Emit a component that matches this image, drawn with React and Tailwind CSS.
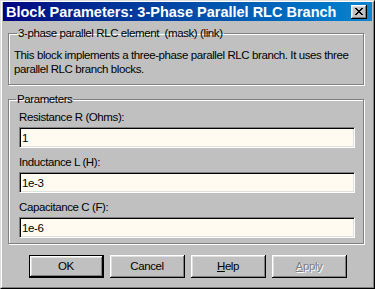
const raised =
  "shadow-[inset_-1px_-1px_0_#000,inset_1px_1px_0_#fff,inset_-2px_-2px_0_#808080,inset_2px_2px_0_#dfdfdf]";

const Field = ({ label, value }) => (
  <div className="flex flex-col">
    <div className="h-[14px] leading-[14px]">{label}</div>
    <input
      type="text"
      defaultValue={value}
      readOnly
      className="mt-[3px] h-[21px] w-full px-[2px] bg-[#fffbf0] border border-t-[#808080] border-l-[#808080] border-r-white border-b-white shadow-[inset_1px_1px_0_#000,inset_-1px_-1px_0_#dfdfdf] outline-none leading-[19px]"
    />
  </div>
);

const Button = ({ children, isDefault, disabled }) => (
  <button
    className={`w-[75px] h-[23px] bg-[#c0c0c0] flex items-center justify-center ${
      isDefault ? "border border-black" : ""
    }`}
    disabled={disabled}
  >
    <span
      className={`w-full h-full flex items-center justify-center ${raised} ${
        disabled ? "text-[#808080] [text-shadow:1px_1px_0_#fff]" : ""
      }`}
    >
      {children}
    </span>
  </button>
);

const CloseIcon = () => (
  <svg width="8" height="7" viewBox="0 0 8 7" shapeRendering="crispEdges">
    <path
      d="M0 0h2v1h-2zM6 0h2v1h-2zM1 1h2v1h-2zM5 1h2v1h-2zM2 2h4v1h-4zM3 3h2v1h-2zM2 4h4v1h-4zM1 5h2v1h-2zM5 5h2v1h-2zM0 6h2v1h-2zM6 6h2v1h-2z"
      fill="#000"
    />
  </svg>
);

const App = () => {
  return (
    <div className="w-[375px] h-[289px] bg-[#c0c0c0] border border-t-[#dfdfdf] border-l-[#dfdfdf] border-r-black border-b-black font-['Liberation_Sans',sans-serif] text-[11.5px] tracking-[-0.4px] text-black overflow-hidden">
      <div className="h-full border border-t-white border-l-white border-r-[#808080] border-b-[#808080] px-[1px] flex flex-col">
        {/* Title bar */}
        <div className="h-[19px] flex items-center justify-between bg-linear-to-r from-[#000080] to-[#1084d0] pl-[3px] pr-[5px]">
          <span className="pt-[2px] font-bold text-[14.5px] tracking-normal text-white leading-none whitespace-nowrap">
            Block Parameters: 3-Phase Parallel RLC Branch
          </span>
          <div className={`w-[16px] h-[14px] bg-[#c0c0c0] flex items-center justify-center ${raised}`}>
            <CloseIcon />
          </div>
        </div>

        {/* Mask description */}
        <fieldset className="mt-[5px] ml-[5px] w-[356px] border border-[#808080] shadow-[1px_1px_0_#fff,inset_1px_1px_0_#fff] pl-[5px] pr-[4px] pb-[8px]">
          <legend className="ml-[3px] px-[1px] leading-[15px]">
            3-phase parallel RLC element&nbsp; (mask) (link)
          </legend>
          <p className="mt-[7px] leading-[14px]">
            This block implements a three-phase parallel RLC branch. It uses three parallel RLC branch blocks.
          </p>
        </fieldset>

        {/* Parameters */}
        <fieldset className="mt-[7px] ml-[5px] w-[356px] border border-[#808080] shadow-[1px_1px_0_#fff,inset_1px_1px_0_#fff] pl-[10px] pr-[8px] pb-[5px]">
          <legend className="ml-[-3px] px-[1px] leading-[15px]">Parameters</legend>
          <div className="flex flex-col gap-[7px] mt-[3px]">
            <Field label="Resistance R (Ohms):" value="1" />
            <Field label="Inductance L (H):" value="1e-3" />
            <Field label="Capacitance C (F):" value="1e-6" />
          </div>
        </fieldset>

        {/* Buttons */}
        <div className="mt-[11px] flex justify-center gap-[6px]">
          <Button isDefault>OK</Button>
          <Button>Cancel</Button>
          <Button>
            <span>
              <span className="underline">H</span>elp
            </span>
          </Button>
          <Button disabled>
            <span>
              <span className="underline">A</span>pply
            </span>
          </Button>
        </div>
      </div>
    </div>
  );
};

export default App;
